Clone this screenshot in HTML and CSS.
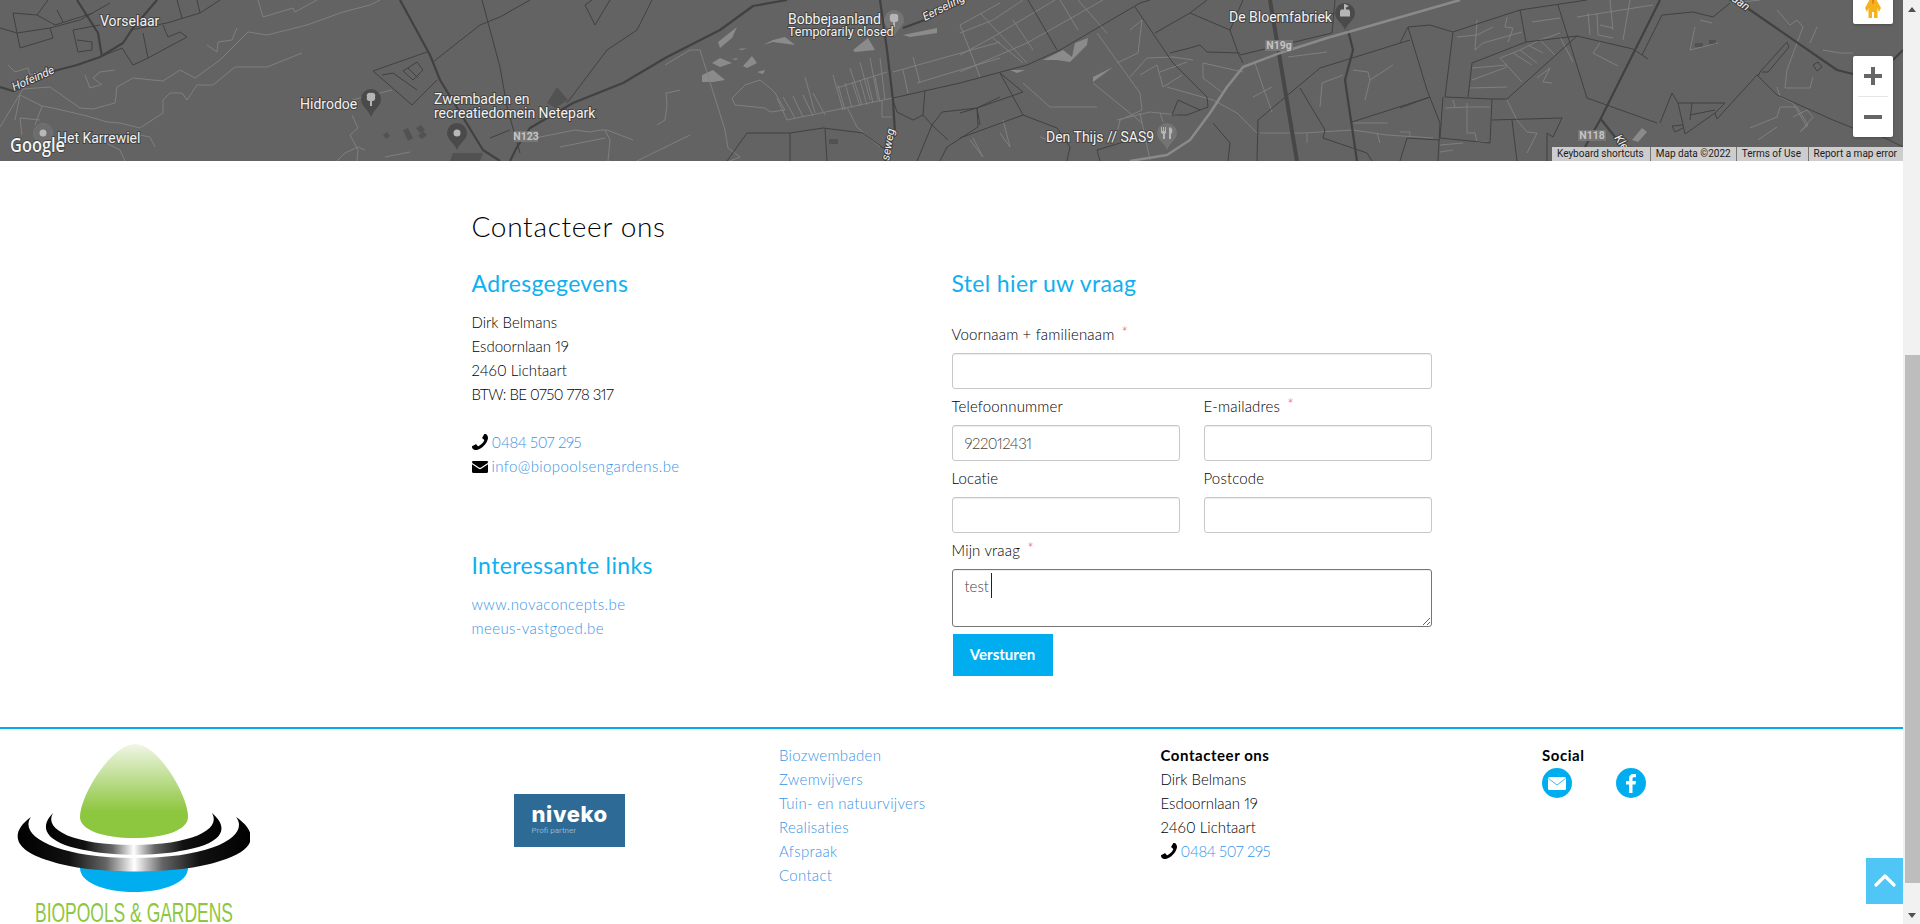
FILE: index.html
```html
<!DOCTYPE html>
<html lang="nl">
<head>
<meta charset="utf-8">
<title>Contact - Biopools &amp; Gardens</title>
<link rel="stylesheet" href="styles.css">
</head>
<body>
<svg class="defs" width="0" height="0" aria-hidden="true">
  <defs>
    <symbol id="i-phone" viewBox="0 0 1408 1408"><path transform="matrix(-1 0 0 1 1408 0)" d="M1408 1112q0 27-10 70.5t-21 68.5q-21 50-122 106-94 51-186 51-27 0-53-3.5t-57.5-12.5-47-14.5-55.5-20.5-49-18q-98-35-175-83-127-79-264-216t-216-264q-48-77-83-175-3-9-18-49t-20.5-55.5-14.5-47-12.5-57.5-3.5-53q0-92 51-186 56-101 106-122 25-11 68.5-21t70.5-10q14 0 21 3 18 6 53 76 11 19 30 54t35 63.5 31 53.5q3 4 17.5 25t21.5 35.5 7 28.5q0 20-28.5 50t-62 55-62 53-28.5 46q0 9 5 22.5t8.5 20.5 14 24 11.5 19q76 137 174 235t235 174q2 1 19 11.5t24 14 20.5 8.5 22.5 5q18 0 46-28.5t53-62 55-62 50-28.5q14 0 28.5 7t35.5 21.5 25 17.5q25 15 53.5 31t63.5 35 54 30q70 35 76 53 3 7 3 21z"/></symbol>
    <symbol id="i-mail" viewBox="0 0 16 12"><path d="M1.2 0h13.6c.6 0 1.2.5 1.2 1.1 0 .5-.3.9-.7 1.2L8.6 6.7c-.4.2-.8.2-1.2 0L.7 2.3C.3 2 0 1.600 0 1.100 0 .5.600 0 1.200 0z"/><path d="M0 3.300v7.500c0 .7.500 1.200 1.200 1.200h13.600c.7 0 1.200-.5 1.200-1.200V3.300L9.200 7.800c-.7.500-1.700.5-2.400 0z"/></symbol>
  </defs>
</svg>

<div class="viewport">
  <div class="page">
    <section class="map">
      <svg class="map-art" width="1903" height="161" viewBox="0 0 1903 161" role="img" aria-label="Kaart van de omgeving van Lichtaart">
        <path class="water" d="M718,42L737,27L732,38L720,48ZM712,63L720,58L732,63L720,67ZM743,66L752,56L757,63L747,68ZM702,75L713,70L725,80L713,82L702,82ZM763,45L773,40L785,37L795,45L773,42ZM853,50L868,38L875,50L855,52ZM903,35L937,28L937,33L910,37ZM757,72L765,70L763,74ZM738,49L747,48L742,50ZM732,59L738,58L736,60ZM1043,60L1063,50L1072,57L1075,43L1088,38L1087,45L1070,62L1057,60ZM1093,77L1113,67L1093,82ZM1010,70L1025,70L1017,73ZM1632,140L1642,128L1647,132L1638,142Z"/>
        <path class="block" d="M453,153L483,153L480,161L450,161ZM547,103L557,87L568,100L555,108ZM383,135L387,132L390,136L386,139ZM403,130L408,128L413,138L408,141ZM416,128L421,125L425,130L420,133ZM418,136L423,131L427,135L422,139ZM829,139H838V144H829ZM1695,43H1703V47H1695ZM1709,40H1716V45H1709Z"/>
        <path class="minor" d="M258,0L263,17L293,8L295,12L317,0M267,35L248,32L220,60L195,78L180,70L163,81L133,78L117,87L115,103L93,109L80,108L50,87L23,89L0,127M302,53L267,67L235,67L213,85L197,85L187,100L182,93L170,93L163,100L163,113L140,128L120,123L107,122L87,116L53,108L42,106L20,95M380,0L370,5L343,12L307,25L267,35M207,45L217,52L218,42L232,40L237,28M8,65L15,72L28,68L30,75L38,72M115,70L100,72L93,78L102,85M85,75L90,88L100,85M20,95L15,120M40,120L20,118L22,135M42,106L35,125M100,140L120,150L125,161M140,135L150,137L155,147M337,161L345,153L358,147L365,150M352,115L358,128L350,135L358,150L357,161M392,90L352,100M385,157L410,152M535,138L575,130L590,132L600,130L607,130L633,140M560,147L605,138M605,130L610,140L608,161M637,161L690,135M665,65L690,50L700,50L725,130L728,148L740,157L730,161M666,92L667,105L665,120L657,125M680,90L667,93M775,93L770,88L760,80L745,85L732,98L735,105L765,108L770,112L785,110L775,93M777,98L787,120L893,98M783,97L795,118M793,96L803,117M803,95L813,116M813,93L825,115M805,77L815,113M833,75L843,110M838,85L845,110M845,83L852,108M852,82L860,106M860,80L867,105M867,78L873,103M875,77L880,102M850,68L862,105M860,62L870,100M870,58L878,100M880,58L885,100M837,88L887,72M893,72L1000,42M917,83L1000,58M913,57L920,83M960,25L980,77M1000,3L960,25M903,70L908,93M882,100L882,117L892,117M847,107L857,127L880,147M960,33L993,20L1023,0M960,55L993,37L1055,0M980,13L1027,63M960,72L1027,43L1073,17L1103,0M1060,0L1078,30M1078,0L1107,33M993,38L1023,63M1013,20L1033,50M1097,33L1140,93L1142,110L1120,120L1117,133M1130,30L1142,20L1138,53L1117,63M1023,83L1050,107L1097,107M1093,83L1142,123M1117,120L1150,112L1177,115M1140,113L1150,160M1160,113L1163,122M1130,77L1147,58L1173,57L1193,60M1160,72L1187,62M1167,87L1213,100L1237,113L1257,133M1182,75L1163,87L1157,65L1140,75M1203,63L1243,72M1203,78L1223,93M1203,63L1203,78M1253,97L1272,87M1263,87L1272,112M1255,63L1263,87M1327,52L1288,57M1353,70L1368,72L1370,80L1365,100M1370,80L1393,65M1343,75L1322,83L1320,107M1260,133L1303,133L1353,130L1387,135L1433,138M1353,123L1388,123M1307,133L1307,143M1377,133L1380,143M973,138L983,157L970,140M1003,120L1010,147L1000,133M1040,137L1048,140M1477,20L1475,50L1483,43L1522,32M1457,37L1477,35L1493,27M1507,17L1505,27L1513,28L1508,42M1532,22L1560,18M1577,17L1653,5M1588,13L1590,35M1597,13L1598,35L1613,38M1610,0L1613,30M1630,0L1623,40M1600,25L1613,28M1500,58L1520,50L1540,40L1560,33M1500,58L1522,82M1513,53L1532,65M1520,50L1537,63M1528,45L1543,53M1540,40L1555,55M1560,37L1573,62M1593,53L1618,66M1600,43L1593,53M1472,68L1507,65M1472,80L1507,67M1470,88L1507,87M1507,100L1517,120L1527,132L1537,133L1527,153M1537,78L1550,68L1543,82L1552,83M1445,108L1467,107L1490,107M1453,100L1455,107M1467,103L1467,133L1475,133L1477,142L1487,142M1400,132L1410,132L1410,138M1440,145L1463,143M1440,152L1453,150M1695,27L1690,50L1718,43M1700,20L1712,23M1777,10L1790,25L1797,20L1803,27L1797,43L1787,70L1785,88L1810,88L1813,77M1823,50L1840,53L1853,53M1817,27L1810,43M1750,128L1777,117L1780,107L1797,107L1808,125L1800,132M1777,87L1780,97L1793,103L1807,127M1793,117L1807,110L1813,117L1800,132M1758,140L1777,127M1733,3L1760,0"/>
        <path class="thin" d="M13,13L37,15L48,0M37,15L55,25L93,13M20,48L13,13M0,28L17,33L50,28L53,38L20,48M50,28L80,20L110,3M57,10L63,22M73,30L100,25M77,40L92,42L92,50L78,52L73,30M122,48L133,65L148,58L187,37L180,32L168,37L163,25M148,58L143,33M130,30L167,23L200,13L220,0M200,13L197,0M177,0L182,18M122,48L100,57M373,71L427,52M373,71L412,105L437,80M382,75L393,73L417,90M403,71L417,62L423,70L413,80L403,71M408,68L418,78M433,62L480,25L500,17L530,0M482,0L500,67L507,107L520,153M585,5L595,25L610,0M592,0L585,5M567,103L607,50L637,30L652,0M490,138L510,130M727,161L747,133L790,133L823,128L863,133L890,153M790,133L790,161M825,129L827,161M893,100L897,112L913,120L923,115L925,90M923,115L932,125L917,161M932,125L942,112L977,108L1000,97M977,108L978,127L947,147L940,161M932,125L948,140M893,98L960,83L1027,65L1060,50L1140,3L1150,0M1028,0L1057,50M1135,7L1173,63L1207,97L1208,107L1200,110M1155,33L1190,13L1207,0M1190,13L1230,30L1243,0M1230,30L1238,53L1243,63M1240,55L1332,33L1335,0M1170,53L1190,48L1200,45L1207,52L1240,53M1257,161L1258,120L1320,68L1410,40M1300,88L1325,130L1323,138L1367,153L1372,161M1352,122L1430,97M1000,73L1023,115L1057,128L1070,147L1067,161M960,113L977,108L1023,92L1000,73M960,138L1023,115M977,108L980,125M1172,115L1178,100L1200,110L1187,115L1172,115M1213,123L1230,143L1228,161M1097,150L1100,161M1097,150L1130,140M1400,43L1408,27L1430,25L1453,32L1480,23L1520,10L1587,0M1408,27L1427,90L1440,123L1438,161M1453,32L1445,97L1490,99L1507,99L1577,36L1633,49L1648,59M1558,5L1587,98L1657,123M1520,10L1526,42M1472,63L1526,42L1577,36M1472,63L1468,97M1443,97L1440,138L1490,143L1492,99M1492,120L1562,118L1553,137L1547,133L1547,161M1512,120L1517,161M1407,138L1440,140M1407,138L1400,161M1400,108L1430,97M1642,55L1662,15L1693,12L1713,17L1730,3M1660,123L1672,93L1678,103L1683,125L1672,126L1675,132L1683,128M1678,103L1725,103L1715,113L1685,134L1683,125M1715,113L1717,119L1757,75L1759,75L1760,72L1787,42L1789,47L1768,72L1762,72M1757,75L1777,95L1833,120L1853,128L1883,137L1903,147M1813,65L1818,62L1822,67L1817,71ZM1690,115L1715,110M1692,103L1690,120"/>
        <path class="heavy" d="M0,87L13,91L50,72L77,65L100,57L123,43L133,28L157,0M77,0L98,33L102,57M400,0L430,55L440,80L483,150L500,161M787,0L753,6L720,30L667,57L623,83L573,103L530,128L517,147L510,161M880,0L887,50L893,100L895,133L890,143L885,161M903,28L930,18L945,10M1348,30L1353,50L1345,80L1357,161M1660,0L1600,120L1585,147M1600,118L1623,147M1740,3L1837,70L1853,74M1893,60L1903,50"/>
        <path class="wide" d="M1270,0L1297,161"/>
        <path class="hwy" d="M1130,161L1167,155L1190,140L1210,113L1227,87L1243,67L1280,53L1327,38L1373,25L1460,0"/>

        <g class="shield">
          <rect x="514" y="131" width="24" height="11"/><text x="526" y="140">N123</text>
          <rect x="1265" y="40" width="28" height="11"/><text x="1279" y="49">N19g</text>
          <rect x="1578" y="130" width="28" height="11"/><text x="1592" y="139">N118</text>
        </g>

        <path class="pin-dark" d="M371,89a10,10 0 0 1 10,10c0,7-7,10-10,18c-3-8-10-11-10-18a10,10 0 0 1 10-10Z"/>
        <path class="tree" d="M371,93a3,3 0 0 1 4,4a3,3 0 0 1-2,4h-1v5h-2v-5h-1a3,3 0 0 1-2-4a3,3 0 0 1 4-4Z"/>
        <path class="pin-dark" d="M457,123a10,10 0 0 1 10,10c0,7-7,9-10,17c-3-8-10-10-10-17a10,10 0 0 1 10-10Z"/>
        <circle class="dot" cx="457" cy="133" r="3.500"/>
        <circle class="pin-ghost" cx="43" cy="133" r="9.500"/>
        <circle class="dot" cx="43" cy="133" r="3.500"/>
        <path class="pin-soft" d="M894,10a10,10 0 0 1 10,10c0,7-7,9-10,17c-3-8-10-10-10-17a10,10 0 0 1 10-10Z"/>
        <path class="tree" d="M894,14a3,3 0 0 1 4,4a3,3 0 0 1-2,4h-1v5h-2v-5h-1a3,3 0 0 1-2-4a3,3 0 0 1 4-4Z"/>
        <path class="pin-dark" d="M1345,3a10,10 0 0 1 10,10c0,7-7,9-10,17c-3-8-10-10-10-17a10,10 0 0 1 10-10Z"/>
        <path class="tree" d="M1345,4l4,2l-3,1.500v2h3l1,2v5h-10v-5l1-2h3v-5.500Z"/>
        <path class="pin-soft" d="M1167,123a10,10 0 0 1 10,10c0,7-7,9-10,17c-3-8-10-10-10-17a10,10 0 0 1 10-10Z"/>
        <path class="tree" d="M1161,127h1v4h1v-4h1v4h1v-4h1v6l-1,1v5h-2v-5l-2-1ZM1170,127c2,1 3,3 2,6l-1,1v5h-2v-11Z"/>

        <text class="place" x="100" y="26">Vorselaar</text>
        <text class="place" x="300" y="109">Hidrodoe</text>
        <text class="place" x="57" y="143">Het Karrewiel</text>
        <text class="place" x="434" y="104">Zwembaden en</text>
        <text class="place" x="434" y="118">recreatiedomein Netepark</text>
        <text class="place" x="788" y="24">Bobbejaanland</text>
        <text class="place small" x="788" y="36">Temporarily closed</text>
        <text class="place" x="1229" y="22">De Bloemfabriek</text>
        <text class="place" x="1046" y="142">Den Thijs // SAS9</text>
        <text class="road" transform="translate(14 91) rotate(-24)">Hofeinde</text>
        <text class="road" transform="translate(925 21) rotate(-27)">Eerselingen</text>
        <text class="road" transform="translate(889 161) rotate(-80)">seweg</text>
        <text class="road" transform="translate(1614 138) rotate(55)">Kleine</text>
        <text class="road" transform="translate(1729 -1) rotate(35)">laan</text>
        <text class="google" x="10" y="152" textLength="55" lengthAdjust="spacingAndGlyphs">Google</text>
      </svg>

      <div class="map-pegman">
        <svg width="18" height="19" viewBox="0 0 18 19"><path class="peg" d="M6,0H12L17,9L15,13L13.500,9V19H10V13H8V19H4.500V9L3,13L1,9Z"/><path class="peg-hi" d="M8,0H10L9.500,5H8.500Z"/></svg>
      </div>
      <div class="map-zoom">
        <button class="zoom-btn" type="button" aria-label="Zoom in"><svg width="18" height="18" viewBox="0 0 18 18"><path d="M7,0H11V7H18V11H11V18H7V11H0V7H7Z"/></svg></button>
        <span class="zoom-sep"></span>
        <button class="zoom-btn" type="button" aria-label="Zoom out"><svg width="18" height="18" viewBox="0 0 18 18"><path d="M0,7H18V11H0Z"/></svg></button>
      </div>
      <div class="map-attr">
        <span>Keyboard shortcuts</span><span>Map data ©2022</span><span>Terms of Use</span><span>Report a map error</span>
      </div>
    </section>

    <main class="contact">
      <h2 class="contact-title">Contacteer ons</h2>
      <div class="contact-cols">
        <div class="contact-left">
          <h3 class="sub">Adresgegevens</h3>
          <p class="block-text">Dirk Belmans<br>Esdoornlaan 19<br>2460 Lichtaart<br><span class="num">BTW: BE 0750 778 317</span></p>
          <p class="block-text gap-line">
            <svg class="ico ico-phone"><use href="#i-phone"/></svg> <a class="tel" href="#">0484 507 295</a><br>
            <svg class="ico ico-mail"><use href="#i-mail"/></svg> <a href="#">info@biopoolsengardens.be</a>
          </p>
          <h3 class="sub links-title">Interessante links</h3>
          <p class="block-text"><a href="#">www.novaconcepts.be</a><br><a href="#">meeus-vastgoed.be</a></p>
        </div>
        <form class="contact-form">
          <h3 class="sub form-title">Stel hier uw vraag</h3>
          <div class="field"><label class="lbl">Voornaam + familienaam <em>*</em></label><input class="inp" type="text"></div>
          <div class="field-row">
            <div class="field"><label class="lbl">Telefoonnummer</label><input class="inp tight" type="text" value="922012431"></div>
            <div class="field"><label class="lbl">E-mailadres <em>*</em></label><input class="inp" type="text"></div>
          </div>
          <div class="field-row">
            <div class="field"><label class="lbl">Locatie</label><input class="inp" type="text"></div>
            <div class="field"><label class="lbl">Postcode</label><input class="inp" type="text"></div>
          </div>
          <div class="field">
            <label class="lbl">Mijn vraag <em>*</em></label>
            <div class="area-wrap"><textarea class="inp area">test</textarea><span class="caret"></span></div>
          </div>
          <button class="send" type="button">Versturen</button>
        </form>
      </div>
    </main>

    <footer class="footer">
      <div class="foot-col foot-logo">
        <svg class="logo" width="250" height="181" viewBox="0 743 250 181" role="img" aria-label="Biopools &amp; Gardens">
          <defs>
            <linearGradient id="egg" x1="0" y1="0" x2="0" y2="1"><stop offset="0" stop-color="#f0f6e6"/><stop offset=".72" stop-color="#8dc63f"/><stop offset="1" stop-color="#8dc63f"/></linearGradient>
            <linearGradient id="ring" x1="0" y1="0" x2="1" y2="0"><stop offset="0" stop-color="#000"/><stop offset=".22" stop-color="#111"/><stop offset=".38" stop-color="#666"/><stop offset=".5" stop-color="#fff"/><stop offset=".62" stop-color="#666"/><stop offset=".78" stop-color="#111"/><stop offset="1" stop-color="#000"/></linearGradient>
          </defs>
          <path fill="#00aeef" d="M80,860H188V868C188,882 165,892 134,892C103,892 80,882 80,868Z"/>
          <path fill="url(#egg)" d="M135,744C158,744 188,795 188,817C188,830 165,838 134,838C103,838 80,830 80,817C80,795 112,744 135,744Z"/>
          <path fill="url(#ring)" d="M31,817C10,832 12,850 50,861C90,875 180,875 220,861C258,850 258,832 236,817C250,835 215,858 134,858C55,858 18,835 31,817Z"/>
          <path fill="url(#ring)" d="M53,813C36,830 50,845 90,851C115,856 155,856 180,851C220,845 232,830 212,813C222,830 190,845 133,845C75,845 43,830 53,813Z"/>
          <text class="logo-text" x="35" y="922" textLength="198" lengthAdjust="spacingAndGlyphs">BIOPOOLS &amp; GARDENS</text>
        </svg>
      </div>
      <div class="foot-col foot-partner">
        <div class="niveko"><strong>niveko</strong><small>Profi partner</small></div>
      </div>
      <div class="foot-col foot-links"><a href="#">Biozwembaden</a><a href="#">Zwemvijvers</a><a href="#">Tuin- en natuurvijvers</a><a href="#">Realisaties</a><a href="#">Afspraak</a><a href="#">Contact</a></div>
      <div class="foot-col">
        <b>Contacteer ons</b><span>Dirk Belmans</span><span>Esdoornlaan 19</span><span>2460 Lichtaart</span>
        <span><svg class="ico ico-phone"><use href="#i-phone"/></svg> <a class="tel" href="#">0484 507 295</a></span>
      </div>
      <div class="foot-col">
        <b>Social</b>
        <div class="social">
          <a class="bubble" href="#" aria-label="E-mail"><svg width="18" height="13" viewBox="0 0 18 13"><rect width="18" height="13" rx="1.500" fill="#fff"/><path d="M0.500,1.500L9,8L17.500,1.500" fill="none" stroke="#00aeef" stroke-width=".8"/></svg></a>
          <a class="bubble" href="#" aria-label="Facebook"><svg width="11" height="19" viewBox="0 0 11 19"><path fill="#fff" d="M3,19V10.500H0V7H3V4.500C3,1.500 4.800,0 7.400,0C8.700,0 9.700,.1 10,.15V3.200H8.200C6.800,3.200 6.500,3.900 6.500,4.900V7H10L9.500,10.500H6.500V19Z"/></svg></a>
        </div>
      </div>
    </footer>
    <a class="to-top" href="#" aria-label="Naar boven"><svg width="22" height="14" viewBox="0 0 22 14"><path d="M2,12L11,3L20,12" fill="none" stroke="#fff" stroke-width="3.200" stroke-linecap="round" stroke-linejoin="round"/></svg></a>
  </div>
  <div class="scrollbar">
    <span class="arrow up"></span>
    <span class="thumb"></span>
    <span class="arrow down"></span>
  </div>
</div>
</body>
</html>
```
FILE: styles.css
```css
* { box-sizing: border-box; }
html, body { margin: 0; height: 924px; overflow: hidden; background: #fff; }
body { font: 300 15px/24px Lato, "Noto Sans", sans-serif; color: #000; font-variant-numeric: proportional-nums; }
.defs { position: absolute; }
a { color: #3a94e6; text-decoration: none; letter-spacing: .4px; }
a.tel { letter-spacing: -.4px; }
.num { letter-spacing: -.55px; }

.viewport { display: flex; width: 1920px; height: 924px; }
.page { position: relative; width: 1903px; height: 924px; overflow: hidden; }

/* Map */
.map { position: relative; height: 161px; background: #636363; overflow: hidden; }
.map-art { display: block; }
.map-art path { fill: none; stroke-linejoin: round; }
.map-art .water { fill: #8b8b8b; }
.map-art .block { fill: #525252; }
.map-art .minor { stroke: #828282; stroke-width: .9; }
.map-art .thin { stroke: #414141; stroke-width: 1; }
.map-art .heavy { stroke: #414141; stroke-width: 2.2; }
.map-art .wide { stroke: #474747; stroke-width: 4; }
.map-art .hwy { stroke: #8a8a8a; stroke-width: 2.500; }
.map-art .pin-dark { fill: #4a4a4a; }
.map-art .pin-soft { fill: #747474; }
.map-art .tree { fill: #b5b5b5; }
.map-art .pin-ghost { fill: #6d6d6d; stroke: #747474; }
.map-art .dot { fill: #b8b8b8; }
.shield rect { fill: #767676; }
.shield text { font: 700 10.500px Roboto, sans-serif; fill: #c4c4c4; text-anchor: middle; }
.place { font: 400 14px Roboto, sans-serif; fill: #f2f2f2; stroke: #3c3c3c; stroke-width: 2px; paint-order: stroke; stroke-opacity: .8; }
.place.small { font-size: 12.500px; }
.road { font: italic 400 11.500px Roboto, sans-serif; fill: #f2f2f2; stroke: #3c3c3c; stroke-width: 2px; paint-order: stroke; }
.google { font: 600 20px "Open Sans", sans-serif; fill: #f4f4f4; stroke: #3c3c3c; stroke-width: 1.500px; paint-order: stroke; }

.map-pegman, .map-zoom { position: absolute; left: 1853px; width: 40px; background: #fff; border-radius: 2px; box-shadow: 0 1px 3px rgba(0,0,0,.25); }
.map-pegman { top: -10px; height: 34px; display: flex; align-items: flex-end; justify-content: center; padding-bottom: 6px; }
.peg { fill: #f5b21b; }
.peg-hi { fill: #e8731a; }
.map-zoom { top: 56px; height: 81px; display: flex; flex-direction: column; align-items: center; }
.zoom-btn { flex: 1; width: 40px; padding: 0; border: 0; background: none; display: flex; align-items: center; justify-content: center; }
.zoom-btn svg { fill: #666; }
.zoom-sep { width: 30px; height: 1px; background: #e6e6e6; flex: none; }
.map-attr { position: absolute; right: 0; bottom: 0; height: 14px; width: 351px; display: flex; background: #cdcdcd; font: 400 10px/14px Roboto, sans-serif; color: #1c1c1c; }
.map-attr span { padding: 0 6px 0 5px; border-left: 1px solid #777; white-space: nowrap; }
.map-attr span:first-child { border-left: 0; }
.map-attr span:nth-child(1) { width: 98px; }
.map-attr span:nth-child(2) { width: 86px; }
.map-attr span:nth-child(3) { width: 72px; }
.map-attr span:nth-child(4) { flex: 1; }

/* Contact */
.contact { width: 960px; margin: 0 auto; height: 566px; padding-top: 45px; }
.contact-title { margin: 0 0 21px; font: 300 28px/40px Lato, "Noto Sans", sans-serif; letter-spacing: .7px; color: #000; }
.contact-cols { display: grid; grid-template-columns: 480px 480px; }
.sub { margin: 0; font: 400 23px/32px Lato, "Noto Sans", sans-serif; letter-spacing: .35px; color: #0fb0ef; }
.block-text { margin: 11px 0 0; }
.gap-line { margin-top: 24px; }
.links-title { margin-top: 71px; }
.ico { display: inline-block; vertical-align: -1px; fill: #000; }
.ico-phone { width: 16px; height: 16px; vertical-align: -2px; }
.ico-mail { width: 16px; height: 12px; }

.form-title { margin-bottom: 23px; }
.field { display: flex; flex-direction: column; margin-bottom: 5px; }
.field-row { display: grid; grid-template-columns: 228px 228px; column-gap: 24px; }
.lbl { height: 24px; margin-bottom: 7px; letter-spacing: .15px; }
.lbl em { font-style: normal; color: #e2574c; font-size: 15px; line-height: 0; vertical-align: 2px; margin-left: 3px; }
.inp { width: 100%; height: 36px; padding: 0 12px; border: 1px solid #c8c8c8; border-radius: 3px; background: #fff; box-shadow: inset 0 1px 1px rgba(0,0,0,.075); font: 300 15px/24px Lato, "Noto Sans", sans-serif; font-variant-numeric: proportional-nums; color: #444; outline: 0; }
.inp.tight { letter-spacing: -.5px; }
.area-wrap { position: relative; height: 58px; }
.area { display: block; height: 58px; padding: 4px 12px; border-color: #767676; resize: vertical; overflow: hidden; }
.caret { position: absolute; left: 39px; top: 4px; width: 1px; height: 25px; background: #222; }
.send { display: block; width: 100px; height: 42px; margin: 7px 0 0 1px; padding: 0 0 2px; border: 0; background: #00aeef; color: #fff; font: 700 15px Lato, "Noto Sans", sans-serif; }

/* Footer */
.footer { display: grid; grid-template-columns: repeat(5, 381.500px); height: 197px; padding-top: 14px; border-top: 2px solid #00aeef; }
.foot-col { display: flex; flex-direction: column; align-items: flex-start; }
.foot-col:nth-child(3) { padding-left: 16px; }
.foot-col:nth-child(4) { padding-left: 16px; }
.foot-col:nth-child(5) { padding-left: 16px; }
.foot-links a { letter-spacing: .3px; }
.foot-col b { font-weight: 700; color: #000; letter-spacing: .55px; }
.logo { display: block; }
.logo-text { font: 400 28px "Liberation Sans", sans-serif; fill: #8dc63f; }
.foot-partner { padding: 51px 0 0 132px; }
.niveko { width: 111px; height: 53px; padding: 8px 0 0 18px; background: #2d6a96; color: #fff; display: flex; flex-direction: column; }
.niveko strong { font: 800 22px/24px Inter, Lato, sans-serif; letter-spacing: .6px; }
.niveko small { font: 400 8px/10px Roboto, sans-serif; color: #8fb4cd; }
.social { display: flex; gap: 44px; margin-top: 1px; }
.bubble { width: 30px; height: 30px; border-radius: 50%; background: #00aeef; display: flex; align-items: center; justify-content: center; }
.to-top { position: absolute; left: 1866px; top: 858px; width: 37px; height: 46px; background: #4fc6f5; display: flex; align-items: center; justify-content: center; padding-bottom: 2px; }

/* Scrollbar */
.scrollbar { width: 17px; height: 924px; background: #f1f1f1; display: flex; flex-direction: column; align-items: flex-end; }
.thumb { width: 15px; height: 528px; margin-top: 343px; background: #bdbdbd; }
.arrow { align-self: center; width: 0; height: 0; border-left: 4px solid transparent; border-right: 4px solid transparent; }
.arrow.up { margin-top: 7px; border-bottom: 5px solid #505050; }
.arrow.down { margin-top: 30px; border-top: 5px solid #505050; }
```
